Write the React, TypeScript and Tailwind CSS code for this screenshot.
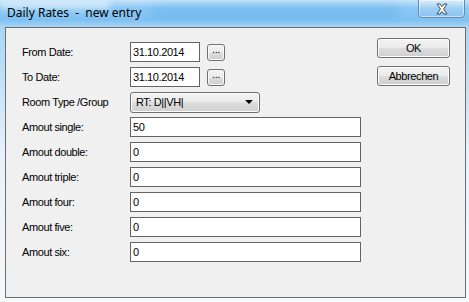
import React from 'react';

const labelFont = "font-['Liberation_Sans',Arial,sans-serif] text-[11px] tracking-[-0.4px] text-black";

const amounts: [string, string][] = [
  ['Amout single:', '50'],
  ['Amout double:', '0'],
  ['Amout triple:', '0'],
  ['Amout four:', '0'],
  ['Amout five:', '0'],
  ['Amout six:', '0'],
];

function Row({ label, children }: { label: string; children: React.ReactNode }) {
  return (
    <div className="flex h-[20px] items-center">
      <div className={`w-[108px] shrink-0 ${labelFont}`}>{label}</div>
      {children}
    </div>
  );
}

function TextBox({ value, width }: { value: string; width: string }) {
  return (
    <div className={`${width} h-[20px] border border-[#646464] bg-white pl-[2px] flex items-center ${labelFont}`}>
      {value}
    </div>
  );
}

function WinButton({ children, className }: { children: React.ReactNode; className: string }) {
  return (
    <div
      className={`flex rounded-[3px] border border-[#707070] bg-[linear-gradient(to_bottom,#f2f2f2_0%,#ebebeb_50%,#dddddd_50%,#cfcfcf_100%)] shadow-[inset_0_0_0_1px_#fcfcfc] ${labelFont} ${className}`}
    >
      {children}
    </div>
  );
}

export default function App() {
  return (
    <div className="relative w-[469px] h-[302px] overflow-hidden bg-[linear-gradient(to_bottom,#c4e3fa_0px,#8cc8f4_8px,#7fc1f2_20px,#a9d5f6_27px,#e6f1fb_50%,#f7f9fb_100%)]">
      {/* glass streaks */}
      <div className="absolute left-[150px] top-[7px] w-[250px] h-[12px] rounded-full bg-[#6fb6ee] opacity-60 blur-[4px]" />
      <div className="absolute left-0 top-0 w-[110px] h-[9px] bg-[#e3f1fc] opacity-70 blur-[3px]" />

      {/* title bar */}
      <div className="relative h-[27px] pl-[7px] pt-[4px] font-['Noto_Sans',sans-serif] text-[12px] leading-[18px] text-black whitespace-pre">
        Daily Rates  -  new entry
      </div>

      {/* close button */}
      <div className="absolute left-[418px] top-[-1px] w-[47px] h-[19px] rounded-b-[4px] border border-[#6b8aa8] bg-[linear-gradient(to_bottom,rgba(230,242,252,0.7),rgba(170,212,244,0.6)_50%,rgba(140,196,240,0.6))] shadow-[inset_0_0_0_1px_rgba(255,255,255,0.5)] flex items-center justify-center">
        <svg width="14" height="12" viewBox="0 0 14 12">
          <path d="M2 1 L5 1 L7 3.5 L9 1 L12 1 L8.6 6 L12 11 L9 11 L7 8.5 L5 11 L2 11 L5.4 6 Z" fill="#ffffff" stroke="#3a4a5c" strokeWidth="1" strokeLinejoin="round" />
        </svg>
      </div>

      {/* client area */}
      <div className="ml-[5px] w-[461px] h-[271px] border border-[#6e6e6e] bg-[#f0f0f0] flex">
        <div className="pl-[16px] pt-[14px] flex flex-col gap-[5px] w-[360px]">
          <Row label="From Date:">
            <TextBox value="31.10.2014" width="w-[70px]" />
            <WinButton className="ml-[7px] w-[18px] h-[17px] text-[8px] items-end justify-center pb-[2px]">...</WinButton>
          </Row>
          <Row label="To Date:">
            <TextBox value="31.10.2014" width="w-[70px]" />
            <WinButton className="ml-[7px] w-[18px] h-[17px] text-[8px] items-end justify-center pb-[2px]">...</WinButton>
          </Row>
          <Row label="Room Type /Group">
            <WinButton className="w-[130px] h-[21px] items-center justify-between pl-[5px] pr-[6px]">
              <span>RT: D||VH|</span>
              <svg width="8" height="4" viewBox="0 0 8 4">
                <path d="M0 0 L8 0 L4 4 Z" fill="#000" />
              </svg>
            </WinButton>
          </Row>
          {amounts.map(([label, value]) => (
            <Row key={label} label={label}>
              <TextBox value={value} width="w-[231px]" />
            </Row>
          ))}
        </div>
        <div className="pl-[11px] pt-[10px] flex flex-col gap-[8px]">
          <WinButton className="w-[73px] h-[20px] items-center justify-center">OK</WinButton>
          <WinButton className="w-[73px] h-[20px] items-center justify-center">Abbrechen</WinButton>
        </div>
      </div>
    </div>
  );
}
